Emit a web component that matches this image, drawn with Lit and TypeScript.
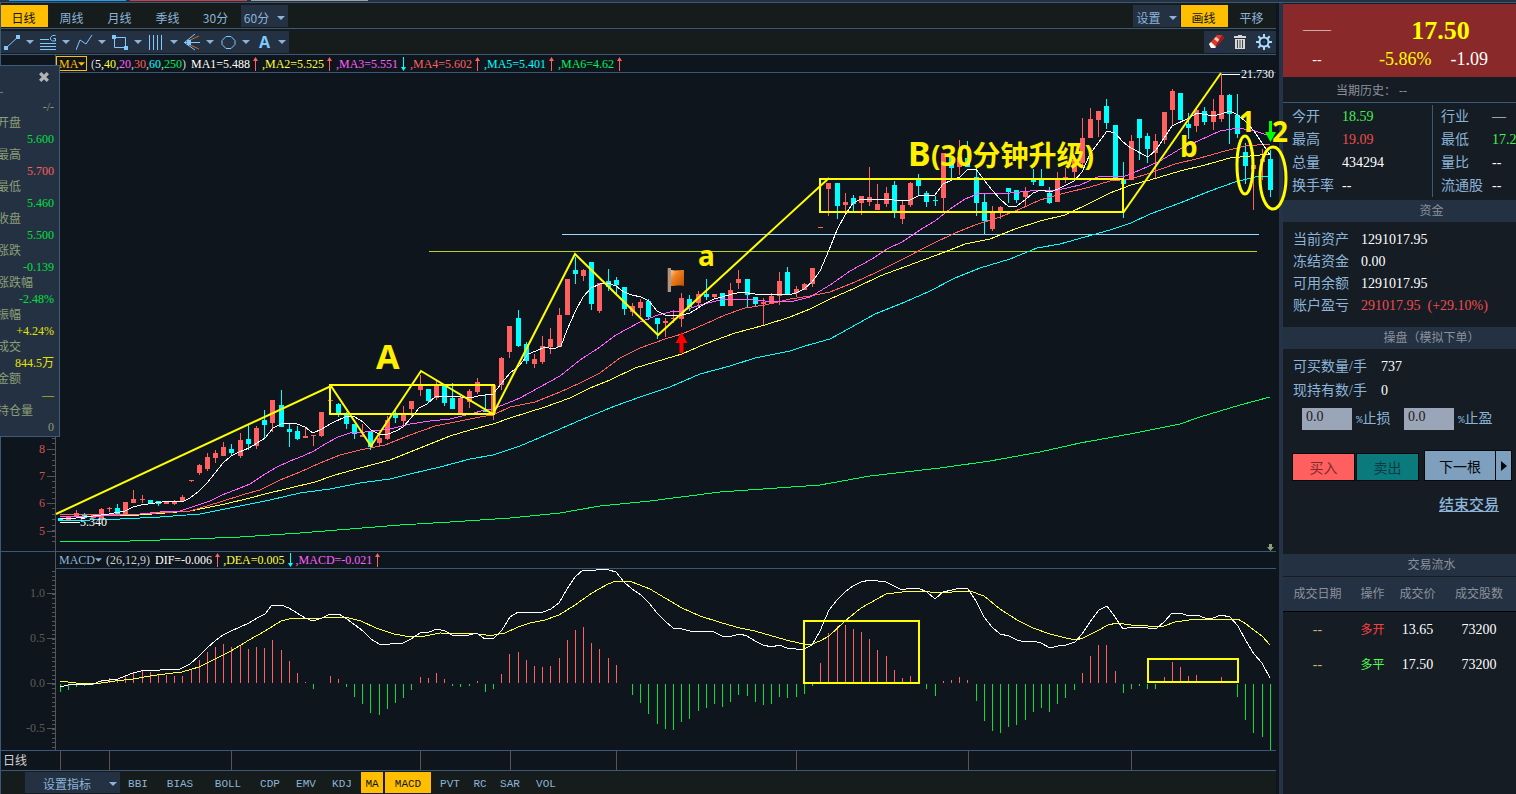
import { LitElement, html, svg, css } from "lit";
import { customElement } from "lit/decorators.js";
import { classMap } from "lit/directives/class-map.js";

/* Candles: direction, body top, body bottom, high, low (plot units). */
type Candle = [string, number, number, number, number];

const CANDLES: Candle[] = `
c 518 521 518 521|r 517 521 517 521|r 513 517 510 517|c 514 518 513 518|r 515 518 515 518|r 509 519 508 519|r 508 509 507 512
c 508 514 504 514|r 502 515 502 515|r 499 503 490 503|r 499 500 495 503|c 500 503 500 503|c 501 504 501 506|r 502 504 502 504
r 502 504 500 505|r 497 501 495 502|r 480 481 480 482|r 465 473 464 475|r 457 469 453 471|r 453 458 450 463|r 447 456 442 456
c 449 453 444 455|r 440 456 433 458|c 439 444 425 450|r 428 446 426 449|c 420 425 410 439|r 400 423 400 432|c 405 427 390 427
c 429 432 423 447|c 431 439 426 440|r 436 438 428 438|r 435 436 435 446|r 412 436 412 437|r 400 401 400 401|c 404 413 403 417
c 414 424 412 429|c 424 434 424 439|r 435 437 424 437|c 431 447 431 450|r 438 443 433 446|r 420 439 416 440|c 414 418 410 423
r 415 421 406 427|r 401 409 401 418|r 386 390 375 396|c 389 401 389 402|r 386 398 381 400|c 385 403 385 406|c 398 409 383 409
r 398 413 396 413|r 391 402 389 408|r 382 392 378 394|c 411 412 394 412|r 385 414 385 420|r 358 385 357 390|r 326 352 326 358
c 318 346 310 347|c 344 361 342 364|r 359 364 354 368|r 346 362 336 364|r 339 347 328 354|r 315 347 308 347|r 279 315 279 315
c 270 274 257 284|r 270 276 269 281|c 262 304 262 310|r 283 311 283 313|c 281 287 269 291|c 280 285 277 295|c 287 309 287 315
r 306 312 303 316|r 302 308 299 316|c 301 317 299 320|c 318 324 318 339|r 321 323 318 337|r 318 319 310 323|r 298 319 293 327
c 299 307 295 311|r 294 303 291 308|c 294 297 279 300|r 294 297 294 298|c 293 306 293 306|r 290 306 283 306|r 279 283 270 289
c 279 295 279 307|c 297 304 297 306|r 302 304 298 326|r 296 304 293 304|r 281 296 272 305|c 272 295 267 295|r 289 293 286 297
r 284 290 283 290|r 268 284 268 287|r 227 228 227 228|r 183 189 183 216|c 183 206 183 219|r 202 205 193 215|c 198 204 195 211
r 196 203 196 215|r 197 202 167 206|r 204 210 184 210|r 193 204 187 207|c 185 212 181 218|r 205 219 201 224|r 183 205 182 207
c 180 186 174 195|c 193 202 191 207|c 200 201 196 206|r 153 198 153 212|c 157 168 157 178|r 157 167 140 175|c 158 167 141 167
c 177 203 168 216|c 202 221 194 234|r 213 229 206 231|r 207 211 206 219|c 188 192 188 203|c 190 200 190 203|r 192 197 187 207
c 180 182 169 185|c 180 186 169 186|c 193 203 187 204|r 179 202 172 202|r 177 178 168 183|r 160 172 155 178|r 138 163 118 168
r 119 138 108 138|r 111 120 111 137|c 106 123 99 129|c 125 178 125 178|c 180 184 162 218|r 141 180 135 180|c 119 138 119 160
c 136 149 133 163|r 141 153 134 179|r 112 140 112 144|r 91 110 89 125|c 93 120 93 120|c 124 128 113 139|r 110 126 107 132
c 111 122 107 125|r 111 122 99 130|r 95 119 74 122|c 95 114 94 144|c 115 134 94 138|c 152 166 143 184|r 165 169 152 210
r 159 162 149 180|c 159 190 150 197`
  .trim()
  .split(/[|\n]/)
  .map((row) => {
    const [dir, ...rest] = row.trim().split(" ");
    return [dir, ...rest.map(Number)] as Candle;
  });

const HISTOGRAM = [
  -8, -6, -3, -2, -1, 2, 5, 4, 8, 11, 13, 11, 9, 8, 7, 7, 14, 23, 31, 36, 39, 36, 37, 34, 36, 35, 43, 33, 22, 10, 1, -5,
  0, 7, 4, -3, -13, -20, -29, -31, -25, -19, -14, -6, 6, 5, 10, 4, -2, -3, -2, 2, -8, -5, 9, 29, 31, 23, 17, 16, 17, 25,
  43, 53, 56, 40, 34, 25, 18, 0, -11, -19, -30, -40, -45, -46, -38, -35, -27, -24, -20, -23, -18, -11, -12, -18, -21,
  -20, -13, -14, -13, -10, -2, 20, 50, 57, 58, 54, 51, 44, 33, 27, 13, 5, 7, 0, -5, -12, 2, 3, 6, 3, -17, -37, -47, -49,
  -43, -41, -36, -28, -24, -28, -20, -14, -6, 10, 27, 38, 38, 12, -9, -5, -2, -5, -5, 6, 21, 16, 7, 8, 2, 0, 6, 2, -13,
  -36, -49, -53, -66,
];

const MA_LINES: [string, string][] = [
  ["l-green", "60,541 130,541 190,539 240,537 300,533 350,529 400,525 450,522 510,518 560,513 600,506 650,501 720,492 820,485 870,476 940,468 990,461 1040,452 1080,443 1130,434 1180,424 1200,417 1240,405 1270,397"],
  ["l-cyan", "60,521 120,519 160,517 200,514 230,508 270,500 300,493 330,489 360,483 390,479 410,474 440,467 470,459 493,455 520,446 560,429 583,419 615,406 640,397 670,387 700,374 730,366 755,358 790,351 805,346 830,339 850,328 875,314 905,302 930,291 955,278 980,268 1010,259 1037,248 1060,244 1085,237 1110,230 1131,223 1150,214 1180,203 1210,191 1235,182 1255,177 1270,176"],
  ["l-yellow", "60,517 140,515 190,511 225,504 250,498 265,494 290,488 315,482 335,475 360,468 390,460 410,452 430,444 450,436 470,430 493,424 510,418 545,407 570,398 590,388 610,380 635,368 665,359 682,354 705,344 735,333 765,325 790,317 810,309 830,299 855,288 880,276 915,263 945,252 965,244 990,239 1015,229 1040,221 1065,215 1090,203 1110,193 1131,185 1150,180 1180,171 1205,165 1230,158 1250,156 1270,154"],
  ["l-red", "60,515 140,514 190,511 220,502 245,494 260,490 280,480 300,472 320,463 340,455 360,450 385,445 410,435 435,426 460,421 480,417 493,415 510,407 535,402 560,392 580,383 600,373 620,358 640,348 665,339 682,334 705,324 725,315 745,308 765,305 790,299 810,296 830,292 855,282 875,273 905,258 930,245 955,233 975,225 1000,217 1020,209 1040,200 1065,193 1090,187 1110,181 1131,179 1150,173 1175,164 1200,158 1225,151 1245,146 1270,144"],
  ["l-pink", "60,516 100,516 140,514 160,512 180,511 195,506 210,501 222,495 235,490 250,484 265,474 277,467 290,461 303,456 314,451 325,444 338,437 350,433 365,432 390,429 410,424 430,421 450,419 470,414 485,410 493,409 520,398 560,376 580,360 600,347 616,335 640,322 658,315 670,312 682,311 700,305 720,300 740,299 765,301 790,302 810,297 830,285 850,271 872,259 887,249 902,242 920,230 935,221 950,209 965,199 980,193 1010,193 1030,191 1058,190 1080,185 1100,176 1123,177 1140,170 1160,161 1180,149 1200,140 1220,131 1238,128 1255,131 1270,136"],
  ["l-white", "60,519 76,518 93,516 109,514 125,511 133,507 141,505 155,503 170,501 182,502 190,498 199,491 207,483 215,473 223,463 231,456 239,452 249,448 257,443 265,438 273,428 281,424 289,423 297,424 305,427 313,433 322,429 330,424 347,416 355,417 363,422 371,430 379,434 388,434 396,431 403,427 411,418 419,408 427,404 435,397 445,396 461,397 470,398 478,396 493,394 501,384 510,373 520,365 528,354 536,351 545,347 553,349 561,346 567,330 575,312 583,297 591,288 600,284 608,283 616,286 624,292 632,295 641,297 649,301 657,311 665,315 673,316 682,315 690,313 698,308 706,303 714,299 722,297 732,294 742,292 755,294 770,294 788,295 796,293 804,289 812,282 820,271 829,250 837,230 845,215 853,203 861,199 877,200 886,199 902,201 910,200 920,195 935,195 943,184 952,180 960,177 968,169 976,169 984,180 992,190 1000,199 1009,207 1017,206 1025,200 1033,193 1041,190 1050,192 1058,189 1066,185 1074,181 1082,172 1090,154 1099,142 1107,131 1115,133 1123,142 1131,148 1148,157 1156,150 1164,138 1172,126 1189,118 1197,113 1213,116 1221,114 1230,111 1238,115 1246,122 1254,131 1262,143 1270,155"],
];

const DIF =
  "60,687 68,685 76,684 93,684 101,681 109,680 118,679 125,676 133,673 141,671 160,670 180,669 182,668 190,664 199,656 207,648 215,641 223,635 231,631 240,627 249,623 257,618 265,614 272,605 281,605 289,608 297,613 305,618 313,621 322,618 330,614 339,614 347,619 355,625 363,631 371,639 379,644 390,644 403,643 411,639 420,633 429,632 437,629 445,631 452,635 461,636 469,635 477,633 485,639 494,638 502,630 510,617 518,612 526,612 537,613 543,612 551,609 559,603 567,589 575,577 583,570 592,571 600,569 609,570 616,572 624,582 632,589 641,595 649,603 657,613 665,621 673,628 682,629 690,631 714,632 722,636 732,636 740,634 747,636 755,641 763,645 772,647 779,645 787,648 796,649 804,649 812,645 820,631 829,610 837,600 845,592 853,586 861,582 870,580 886,582 894,586 902,590 910,588 918,588 927,592 935,599 943,592 952,590 960,588 968,589 976,601 984,617 992,627 1000,634 1009,636 1017,640 1025,642 1033,641 1041,643 1050,648 1058,646 1066,645 1075,642 1082,634 1090,622 1099,610 1107,606 1115,617 1123,629 1131,627 1140,627 1156,629 1164,622 1172,613 1180,613 1189,616 1197,615 1205,618 1213,618 1221,615 1230,617 1238,626 1246,641 1254,654 1262,663 1270,678";
const DEA =
  "60,681 76,683 101,683 115,681 133,679 150,676 165,674 182,672 199,667 215,659 231,651 249,640 265,631 281,621 293,618 322,618 345,617 361,621 376,628 394,634 411,637 425,636 440,633 478,634 486,635 494,635 505,633 518,627 530,623 545,620 559,615 575,605 592,593 608,584 616,581 632,582 650,589 665,598 682,608 700,616 722,623 740,628 755,631 772,636 790,641 804,644 812,644 820,641 829,636 845,621 861,608 886,594 910,591 925,591 935,593 952,592 970,591 984,596 1000,609 1017,620 1033,628 1050,634 1066,638 1076,640 1083,638 1099,630 1108,625 1117,623 1131,625 1148,626 1164,626 1175,622 1189,620 1213,619 1238,619 1246,624 1262,636 1270,645";

const barX = (i: number) => Math.floor(60.3 + i * 8.176);

const range = (from: number, to: number, step: number) => {
  const out: number[] = [];
  for (let v = from; v <= to; v += step) out.push(Math.round(v));
  return out;
};

const caret = html`<svg class="caret" viewBox="0 0 8 4" aria-hidden="true"><path d="M0 0h8L4 4z" /></svg>`;
const up = html`<svg class="up" viewBox="0 0 7 14" aria-hidden="true"><path d="M3 4h1v10H3zM3.500 0L6 4H1z" /></svg>`;
const down = html`<svg class="down" viewBox="0 0 7 14" aria-hidden="true"><path d="M3 0h1v10H3zM3.500 14L6 10H1z" /></svg>`;

@customElement("price-plot")
export class PricePlot extends LitElement {
  static styles = css`
    :host { display: block; position: relative; z-index: 2; }
    .plot { display: block; width: 100%; height: auto; overflow: visible; }
    .crisp { shape-rendering: crispEdges; }
    .axis { stroke: #555555; }
    .axis-text { font: 12px "Liberation Serif", serif; fill: #d94f4f; text-anchor: end; }
    .tag { font: 12px "Liberation Serif", serif; fill: #ffffff; }
    .r { fill: #ff6060; }
    .c { fill: #00ffff; }
    .line { fill: none; }
    .l-white { stroke: #ffffff; }
    .l-pink { stroke: #ff60ff; }
    .l-red { stroke: #ff6060; }
    .l-yellow { stroke: #ffff40; }
    .l-cyan { stroke: #00ffff; }
    .l-green { stroke: #00ff60; }
    .support { stroke: #a0d8f8; }
    .support-2 { stroke: #b4d41c; }
    .ink { fill: none; stroke: #ffff00; stroke-width: 2; }
    .ring { stroke-width: 3; }
    .note { font-family: "Noto Sans", "Noto Sans CJK SC", sans-serif; font-weight: 700; fill: #fff000; }
    .n34 { font-size: 34px; }
    .n28 { font-size: 28px; }
    .sell-mark { fill: #00ff00; }
    .buy-mark { fill: #ff0000; }
    .end { fill: #8b9e77; }
  `;

  render() {
    return html`
      <svg class="plot" viewBox="1 73 1275 478" role="img" aria-label="日线 K线图">
        <defs>
          <linearGradient id="cloth" x1="0" x2="1" y1="0" y2="1">
            <stop offset="0" stop-color="#ffc890" />
            <stop offset="0.350" stop-color="#f08020" />
            <stop offset="1" stop-color="#c05000" />
          </linearGradient>
        </defs>
        <g class="crisp">
          <path class="axis" d="M55.500 73V551" />
          ${range(438, 546, 5.42).map((y) => svg`<path class="axis" d="M52 ${y + 0.5}H55" />`)}
          ${[449, 476, 503, 531].map((y) => svg`<path class="axis" d="M47 ${y + 0.5}H55" />`)}
          <path class="support" d="M562 234.500H1259" />
          <path class="support-2" d="M429 251.500H1257" />
          ${CANDLES.map(([dir, top, bottom, high, low], i) => svg`
            <rect class=${dir} x=${barX(i)} y=${high} width="1" height=${low - high}></rect>
            <rect class=${dir} x=${barX(i) - 2} y=${top} width="5" height=${bottom - top}></rect>`)}
          ${MA_LINES.map(([name, points]) => svg`<polyline class="line ${name}" points=${points} />`)}
          <path class="l-white" d="M60 522.500H80M1222 74.500H1240" />
        </g>
        ${[8, 7, 6, 5].map((v, i) => svg`<text class="axis-text" x="45" y=${[453, 480, 507, 535][i]}>${v}</text>`)}
        <text class="tag" x="80" y="526">5.340</text>
        <text class="tag" x="1241" y="78">21.730</text>
        <g>
          <path fill="#a89888" d="M667 268h4v24h-4z" />
          <path fill="#5a3028" d="M667 268h1v24h-1z" />
          <path fill="url(#cloth)" d="M671 270c5 1 8 0 13 0v16c-5-1-8 0-13 0z" />
        </g>
        <path class="buy-mark" d="M681.500 332l6 11h-4v10h-4v-10h-4z" />
        <path class="sell-mark" d="M1269 121h3v11h4l-5.500 10l-5.500-10h4z" />
        <path class="end" d="M1269 544h3v3h2l-3.500 4l-3.500-4h2z" />
        <polyline class="ink" points="56,514 331,386 371,446 421,371 493,414 575,254 658,335 829,178" />
        <path class="ink" d="M1123 213L1221 73" />
        <rect class="ink crisp" x="330" y="385" width="164" height="29" />
        <rect class="ink crisp" x="820" y="179" width="303" height="33" />
        <ellipse class="ink ring" cx="1245" cy="165" rx="8" ry="29" />
        <ellipse class="ink ring" cx="1273" cy="178" rx="13" ry="31" />
        <text class="note n34" x="376" y="369">A</text>
        <text class="note n34" x="908" y="166">B</text>
        <text class="note n28" x="931" y="166">(30分钟升级)</text>
        <text class="note n28" x="698" y="266">a</text>
        <text class="note n28" x="1180" y="157">b</text>
        <text class="note n28" x="1239" y="132">1</text>
        <text class="note n28" x="1272" y="142">2</text>
      </svg>
    `;
  }
}

@customElement("macd-plot")
export class MacdPlot extends LitElement {
  static styles = css`
    :host { display: block; }
    .plot { display: block; width: 100%; height: auto; shape-rendering: crispEdges; }
    .axis { stroke: #555555; }
    .axis-text { font: 12px "Liberation Serif", serif; fill: #5c5c5c; text-anchor: end; }
    .line { fill: none; }
    .dif { stroke: #ffffff; }
    .dea { stroke: #ffff40; }
    .pos { fill: #ff6060; }
    .neg { fill: #00e040; }
    .ink { fill: none; stroke: #ffff00; stroke-width: 2; }
  `;

  render() {
    return html`
      <svg class="plot" viewBox="1 569 1275 181" role="img" aria-label="MACD">
        <path class="axis" d="M55.500 569V750" />
        ${range(571, 748, 4.5).map((y) => svg`<path class="axis" d="M52 ${y + 0.5}H55" />`)}
        ${["1.0", "0.5", "0.0", "-0.5"].map((t, i) => svg`
          <path class="axis" d="M47 ${593.5 + i * 45}H55" />
          <text class="axis-text" x="45" y=${597 + i * 45}>${t}</text>`)}
        ${HISTOGRAM.map((v, i) => svg`
          <rect class=${v > 0 ? "pos" : "neg"} x=${barX(i)} y=${v > 0 ? 683 - v : 684} width="1" height=${Math.abs(v)}></rect>`)}
        <polyline class="line dea" points=${DEA} />
        <polyline class="line dif" points=${DIF} />
        <rect class="ink" x="804" y="621" width="115" height="62" />
        <rect class="ink" x="1148" y="659" width="90" height="23" />
      </svg>
    `;
  }
}

@customElement("quote-popup")
export class QuotePopup extends LitElement {
  static styles = css`
    :host {
      display: block; box-sizing: border-box; width: 60px; overflow: hidden; padding: 4px 5px 1px 0;
      background: #243142; border: 1px solid #3f5b7c; border-left: 0;
      font: 12px/16px "Liberation Serif", "Noto Sans CJK SC", serif; color: #8b9e77;
    }
    .close { display: block; margin: 0 3px 0 auto; padding: 0; width: 14px; height: 13px; border: 0; background: none; }
    .close svg { display: block; margin: 0 auto; width: 12px; height: 12px; }
    .list { margin: 0 0 0 -3px; }
    .label { margin: 0; line-height: 17px; white-space: nowrap; }
    .value { margin: 0; line-height: 15px; text-align: right; }
    .up { color: #ff5c5c; }
    .down { color: #00e040; }
    .warm { color: #e4e400; }
  `;

  render() {
    const rows: [string, string, string][] = [
      ["–", "-/-", ""],
      ["开盘", "5.600", "down"],
      ["最高", "5.700", "up"],
      ["最低", "5.460", "down"],
      ["收盘", "5.500", "down"],
      ["涨跌", "-0.139", "down"],
      ["涨跌幅", "-2.48%", "down"],
      ["振幅", "+4.24%", "warm"],
      ["成交", "844.5万", "warm"],
      ["金额", "—", "warm"],
      ["持仓量", "0", ""],
    ];
    return html`
      <button class="close" aria-label="关闭">
        <svg viewBox="0 0 11 11"><path d="M2 2l7 7M9 2l-7 7" stroke="#b4b4b4" stroke-width="3" /></svg>
      </button>
      <dl class="list">
        ${rows.map(([label, value, tone]) => html`<dt class="label">${label}</dt><dd class="value ${tone}">${value}</dd>`)}
      </dl>
    `;
  }
}

@customElement("trade-panel")
export class TradePanel extends LitElement {
  static styles = css`
    :host {
      display: block; overflow: hidden; background: #151c24; color: #8cb4d8;
      font: 14px/22px "Liberation Serif", "Noto Sans CJK SC", serif;
    }
    .quote { display: flex; margin-top: 1px; height: 73px; background: #8a2929; color: #ffffff; }
    .name { width: 68px; text-align: center; padding-top: 11px; line-height: 30px; font-size: 14px; }
    .name div { height: 30px; }
    .figures { flex: 1; text-align: center; padding-top: 12px; }
    .last { font-size: 26px; line-height: 30px; font-weight: 700; color: #ffff00; margin-left: 14px; }
    .change { display: flex; justify-content: center; gap: 19px; font-size: 18px; line-height: 27px; }
    .yellow { color: #ffff00; }
    .history { padding-left: 53px; font-size: 12px; line-height: 25px; height: 26px; padding-top: 2px; box-sizing: border-box; color: #8a929c; border-bottom: 1px solid #3c5878; }
    .facts { display: flex; overflow: hidden; padding: 2px 0 3px; line-height: 23px; }
    .fact-col { display: grid; grid-template-columns: 50px 1fr; margin: 0; padding-left: 9px; width: 149px; box-sizing: border-box; align-content: start; white-space: nowrap; }
    .fact-col + .fact-col { border-left: 1px solid #3c5878; padding-left: 8px; grid-template-columns: 51px 1fr; width: auto; flex: 1; overflow: hidden; }
    dt, dd { margin: 0; }
    dd { color: #ffffff; }
    dd.green { color: #44f050; }
    dd.red { color: #f04c4c; }
    .bar { margin: 0; padding-left: 64px; text-align: center; font-size: 12px; font-weight: 400; line-height: 23px; height: 22px; background: #243142; color: #8a929c; }
    .funds { display: grid; grid-template-columns: 68px 1fr; margin: 0; padding: 7px 0 10px 10px; white-space: pre; }
    .lots { margin: 0; padding: 6px 0 0 10px; line-height: 24px; }
    .lots div { display: flex; gap: 14px; }
    .stops { display: flex; align-items: flex-start; height: 22px; padding: 5px 0 20px 19px; }
    .stops input { box-sizing: border-box; width: 50px; height: 22px; padding: 0 0 5px 4px; border: 0; border-radius: 0; background: #9ba5b8; color: #1a1a1a; font: 14px "Liberation Serif", serif; }
    .stops label { width: 52px; height: 22px; box-sizing: border-box; padding-left: 4px; font-size: 14px; line-height: 22px; white-space: nowrap; }
    .pct { font-family: "Liberation Mono", monospace; font-size: 11px; }
    .actions { display: flex; align-items: flex-end; padding: 0 4px 0 9px; }
    .actions button { box-sizing: border-box; padding: 0; border: 1px solid #05080c; font: 14px/20px "Noto Sans CJK SC", sans-serif; }
    .actions .buy { width: 63px; height: 28px; background: #ff5f5f; color: #7c2c2c; }
    .actions .sell { width: 63px; height: 28px; margin: 0 5px 0 1px; background: #0a7a7c; color: #0a3c44; }
    .actions .next { width: 72px; height: 31px; background: #7f9fbf; color: #05080c; }
    .actions .more { display: grid; place-items: center; width: 17px; height: 31px; margin-left: -1px; background: #7f9fbf; }
    .more svg { width: 6px; height: 10px; }
    .finish { padding: 14px 17px 38px 0; line-height: 20px; text-align: right; }
    .finish a { color: #8cb4d8; font-size: 15px; font-weight: 500; }
    .log { width: 100%; margin-top: 1px; border-collapse: collapse; table-layout: fixed; text-align: center; white-space: nowrap; }
    .log th { height: 34px; padding: 0; background: #243142; color: #8a929c; font-size: 12px; font-weight: 400; border-bottom: 1px solid #000000; }
    .log td { height: 35px; padding: 0; color: #ffffff; line-height: 20px; }
    .log td.none { color: #d0b070; }
    .log td.long { color: #ff4040; font-size: 12px; }
    .log td.flat { color: #50ff50; font-size: 12px; }
    .c1 { width: 69px; }
    .c2 { width: 41px; }
    .c3 { width: 49px; }
    .c5 { width: 4px; }
  `;

  render() {
    return html`
      <section class="quote">
        <div class="name"><div>——</div><div>--</div></div>
        <div class="figures">
          <div class="last">17.50</div>
          <div class="change"><span class="yellow">-5.86%</span><span>-1.09</span></div>
        </div>
      </section>
      <div class="history">当期历史：&nbsp;--</div>
      <div class="facts">
        <dl class="fact-col">
          <dt>今开</dt><dd class="green">18.59</dd>
          <dt>最高</dt><dd class="red">19.09</dd>
          <dt>总量</dt><dd>434294</dd>
          <dt>换手率</dt><dd>--</dd>
        </dl>
        <dl class="fact-col">
          <dt>行业</dt><dd>—</dd>
          <dt>最低</dt><dd class="green">17.2</dd>
          <dt>量比</dt><dd>--</dd>
          <dt>流通股</dt><dd>--</dd>
        </dl>
      </div>
      <h2 class="bar">资金</h2>
      <dl class="funds">
        <dt>当前资产</dt><dd>1291017.95</dd>
        <dt>冻结资金</dt><dd>0.00</dd>
        <dt>可用余额</dt><dd>1291017.95</dd>
        <dt>账户盈亏</dt><dd class="red">291017.95  (+29.10%)</dd>
      </dl>
      <h2 class="bar">操盘（模拟下单）</h2>
      <dl class="lots">
        <div><dt>可买数量/手</dt><dd>737</dd></div>
        <div><dt>现持有数/手</dt><dd>0</dd></div>
      </dl>
      <div class="stops">
        <input id="loss" value="0.0" /><label for="loss"><span class="pct">%</span>止损</label>
        <input id="gain" value="0.0" /><label for="gain"><span class="pct">%</span>止盈</label>
      </div>
      <div class="actions">
        <button class="buy">买入</button>
        <button class="sell">卖出</button>
        <button class="next">下一根</button>
        <button class="more" aria-label="更多"><svg viewBox="0 0 6 10"><path d="M0 0l6 5l-6 5z" fill="#05080c" /></svg></button>
      </div>
      <div class="finish"><a href="#end">结束交易</a></div>
      <h2 class="bar">交易流水</h2>
      <table class="log">
        <colgroup><col class="c1" /><col class="c2" /><col class="c3" /><col /></colgroup>
        <thead><tr><th>成交日期</th><th>操作</th><th>成交价</th><th>成交股数</th></tr></thead>
        <tbody>
          <tr><td class="none">--</td><td class="long">多开</td><td>13.65</td><td>73200</td></tr>
          <tr><td class="none">--</td><td class="flat">多平</td><td>17.50</td><td>73200</td></tr>
        </tbody>
      </table>
    `;
  }
}

const TOOLS = [
  { label: "线段", icon: svg`<path class="s" d="M2 14L14 3" /><path class="f" d="M0 12h4v4H0zM12 1h4v4h-4z" />` },
  { label: "水平线", icon: svg`<path class="s" d="M0 5.500h9M0 9.500h16M0 12.500h16M0 15.500h16M15.500 1.500h-3l-2 2v2l2 1.500h3V4.500h-2" />` },
  { label: "折线", icon: svg`<path class="s" d="M0 16L4 6L10 10L16 1" />` },
  { label: "矩形", icon: svg`<path class="s" d="M2.500 3.500h11v10h-11z" /><path class="f" d="M0 1h4v4H0zM12 12h4v4h-4z" />` },
  { label: "周期线", icon: svg`<path class="s" d="M1.500 1v15M5.500 1v15M9.500 1v15M13.500 1v15" />` },
  { label: "扇形线", icon: svg`<path class="s" d="M0 8.500h16M1 8L11 0M1 9L11 16" /><path class="o" d="M4 7L15 2M4 10L15 15" /><path class="f" d="M3 6h4v5H3z" />` },
  { label: "圆", icon: svg`<path class="s" d="M6 2.500h5l4 4v4l-4 4H6l-4-4v-4z" />` },
  { label: "文字", text: "A" },
];

@customElement("app-root")
export class AppRoot extends LitElement {
  static styles = css`
    :host {
      display: block; min-height: 100vh; overflow: hidden; background: #0e151c; color: #8cb4d8;
      font: 12px/16px "Noto Sans CJK SC", sans-serif;
    }
    button { padding: 0; border: 0; background: none; color: inherit; font: inherit; white-space: nowrap; }
    .strip { display: flex; gap: 4px; box-sizing: border-box; height: 3px; padding-left: 9px; background: #243142; border-bottom: 1px solid #3c5878; }
    .strip span { width: 117px; height: 1px; }
    .s1 { background: #20a0f0; }
    .s2 { background: #d04040; }
    .s3 { background: #a0a0a0; }
    .page { display: grid; grid-template-columns: minmax(0, 1fr) 233px; min-height: calc(100vh - 3px); }
    .desk { position: relative; z-index: 1; box-sizing: border-box; border-left: 1px solid #3c5878; border-right: 4px solid #243347; padding-right: 3px; display: flex; flex-direction: column; }
    .bar { display: flex; justify-content: space-between; box-sizing: border-box; height: 26px; padding-top: 2px; background: #151c1b; border-bottom: 1px solid #3c5878; }
    .group { display: flex; gap: 1px; height: 22px; }
    .tab { display: flex; align-items: center; justify-content: center; width: 47px; height: 22px; padding: 3px 2px 0 0; box-sizing: border-box; }
    .drop { gap: 8px; padding-left: 2px; background: #243142; }
    .on { background: #ffbf00; color: #0e151c; }
    .caret { width: 8px; height: 4px; fill: #8cb4d8; }
    .tools { gap: 0; background: #243142; }
    .tool { display: flex; align-items: center; gap: 5px; width: 36px; height: 22px; padding-left: 3px; box-sizing: border-box; }
    .tool .pic { width: 17px; height: 17px; }
    .tool .letter { width: 17px; text-align: center; font: 700 16px/17px "Open Sans", sans-serif; color: #80c8ff; }
    .s { fill: none; stroke: #80c8ff; }
    .f { fill: #80c8ff; }
    .o { fill: none; stroke: #d06820; }
    .act { width: 24px; height: 22px; display: grid; place-items: center; }
    .act svg { width: 16px; height: 16px; }
    .legend { display: flex; align-items: center; box-sizing: border-box; height: 18px; margin-left: 54px; border-left: 1px solid #555555; border-bottom: 1px solid #3c5878; font: 12px/16px "Liberation Serif", serif; white-space: pre; }
    .macd-head { height: 17px; padding-left: 3px; }
    .pick { display: flex; align-items: center; height: 15px; width: 31px; box-sizing: border-box; padding-left: 2px; border: 1px solid #ffbf00; color: #ffbf00; }
    .pick .caret, .plain .caret { width: 7px; height: 4px; fill: currentColor; }
    .plain { display: flex; align-items: center; color: #8cb4d8; }
    .params { margin: 0 5px 0 4px; color: #c8d0d8; }
    .up, .down { width: 7px; height: 14px; margin: 0 2px; }
    .up { fill: #ff6060; }
    .down { fill: #00ffff; }
    .white { color: #ffffff; }
    .yellow { color: #ffff40; }
    .pink { color: #ff60ff; }
    .red { color: #ff6060; }
    .cyan { color: #00ffff; }
    .green { color: #00f060; }
    .slot { display: flex; align-items: center; width: 74px; }
    .slot.first { width: 71px; }
    .rule { border-top: 1px solid #3c5878; }
    .popup { position: absolute; left: -1px; top: 62px; z-index: 3; }
    .time { display: block; position: relative; border-top: 1px solid #3c5878; border-bottom: 1px solid #3c5878; }
    .time svg { display: block; width: 100%; height: auto; shape-rendering: crispEdges; }
    .time-text { font: 12px "Noto Sans CJK SC", sans-serif; fill: #d0d0d0; }
    .indicators { display: flex; flex: 1 0 23px; padding: 1px 0 1px 24px; background: #151c1b; font: 11px/20px "Liberation Mono", monospace; }
    .setup { display: flex; align-items: center; justify-content: flex-end; gap: 21px; width: 95px; height: 21px; padding: 2px 3px 0 0; box-sizing: border-box; background: #243142; font: 12px/20px "Noto Sans CJK SC", sans-serif; }
    .setup .caret { margin-left: -3px; }
    .ind { height: 21px; padding-top: 2px; }
    .w2 { width: 24px; }
    .w3 { width: 36px; }
    .w4 { width: 48px; }
    .ind.on { margin: 0 1px; }
    .w2.on { width: 22px; }
    .w4.on { width: 46px; }
  `;

  render() {
    const indicators = ["BBI", "BIAS", "BOLL", "CDP", "EMV", "KDJ", "MA", "MACD", "PVT", "RC", "SAR", "VOL"];
    return html`
      <div class="strip"><span class="s1"></span><span class="s2"></span><span class="s3"></span></div>
      <div class="page">
        <main class="desk">
          <nav class="bar">
            <div class="group">
              <button class="tab on">日线</button>
              ${["周线", "月线", "季线", "30分"].map((t) => html`<button class="tab">${t}</button>`)}
              <button class="tab drop">60分${caret}</button>
            </div>
            <div class="group">
              <button class="tab drop">设置${caret}</button>
              <button class="tab on">画线</button>
              <button class="tab">平移</button>
            </div>
          </nav>
          <div class="bar">
            <div class="group tools">
              ${TOOLS.map((t) => html`
                <button class="tool" aria-label=${t.label}>
                  ${t.text ? html`<span class="letter">${t.text}</span>` : html`<svg class="pic" viewBox="0 0 17 17">${t.icon}</svg>`}
                  ${caret}
                </button>`)}
            </div>
            <div class="group tools">
              <button class="act" aria-label="橡皮擦">
                <svg viewBox="0 0 16 16">
                  <path d="M2 15.500h14" stroke="#302868" />
                  <path d="M9 1h5l2 3L7 14H3L1 10z" fill="#e03828" />
                  <path d="M1 10l2-2l5 5l-1 1H3z" fill="#ffffff" />
                  <path d="M6 5l2-2l5 4l-2 2z" fill="#ffd0c8" />
                  <path d="M14 1l2 3l-8 9v-2z" fill="#981c14" />
                </svg>
              </button>
              <button class="act" aria-label="删除">
                <svg viewBox="0 0 16 16">
                  <path d="M6 1h4v1h4v2H2V2h4zM3 5h10v10H3z" fill="#d8d8d8" />
                  <path d="M5.500 6v8M8 6v8M10.500 6v8" stroke="#404850" />
                </svg>
              </button>
              <button class="act" aria-label="选项">
                <svg viewBox="0 0 16 16">
                  <path d="M8 0v3M8 13v3M0 8h3M13 8h3M2.300 2.300l2.200 2.200M11.500 11.500l2.200 2.200M13.700 2.300l-2.200 2.200M4.500 11.500l-2.200 2.200" stroke="#a8dcff" stroke-width="2" />
                  <circle cx="8" cy="8" r="4.500" fill="#182430" stroke="#a8dcff" stroke-width="2" />
                  <circle cx="8" cy="8" r="1.500" fill="#304258" />
                </svg>
              </button>
            </div>
          </div>
          <div class="legend">
            <button class="pick">MA${caret}</button>
            <span class="params">(<span class="white">5,</span><span class="yellow">40</span>,<span class="pink">20</span>,<span class="red">30</span>,<span class="cyan">60</span>,<span class="green">250</span>)</span>
            <span class="slot first white">MA1=5.488${up}</span>
            <span class="slot yellow">,MA2=5.525${up}</span>
            <span class="slot pink">,MA3=5.551${down}</span>
            <span class="slot red">,MA4=5.602${up}</span>
            <span class="slot cyan">,MA5=5.401${up}</span>
            <span class="slot green">,MA6=4.62${up}</span>
          </div>
          <price-plot></price-plot>
          <div class="rule"></div>
          <div class="legend macd-head">
            <button class="plain">MACD${caret}</button>
            <span class="params">(26,12,9)</span>
            <span class="white">DIF=-0.006</span>${up}
            <span class="yellow">,DEA=0.005</span>${down}
            <span class="pink">,MACD=-0.021</span>${up}
          </div>
          <macd-plot></macd-plot>
          <div class="time">
            <svg viewBox="1 751 1275 19">
              <text class="time-text" x="3" y="765">日线</text>
              ${[60, 109, 231, 420, 510, 616, 796, 968, 1131].map((x) => svg`<path d="M${x + 0.5} 751V770" stroke="#555555" />`)}
            </svg>
          </div>
          <nav class="indicators">
            <button class="setup">设置指标${caret}</button>
            ${indicators.map((t) => html`
              <button class=${classMap({ ind: true, [`w${t.length}`]: true, on: t === "MA" || t === "MACD" })}>${t}</button>`)}
          </nav>
          <quote-popup class="popup"></quote-popup>
        </main>
        <trade-panel></trade-panel>
      </div>
    `;
  }
}
